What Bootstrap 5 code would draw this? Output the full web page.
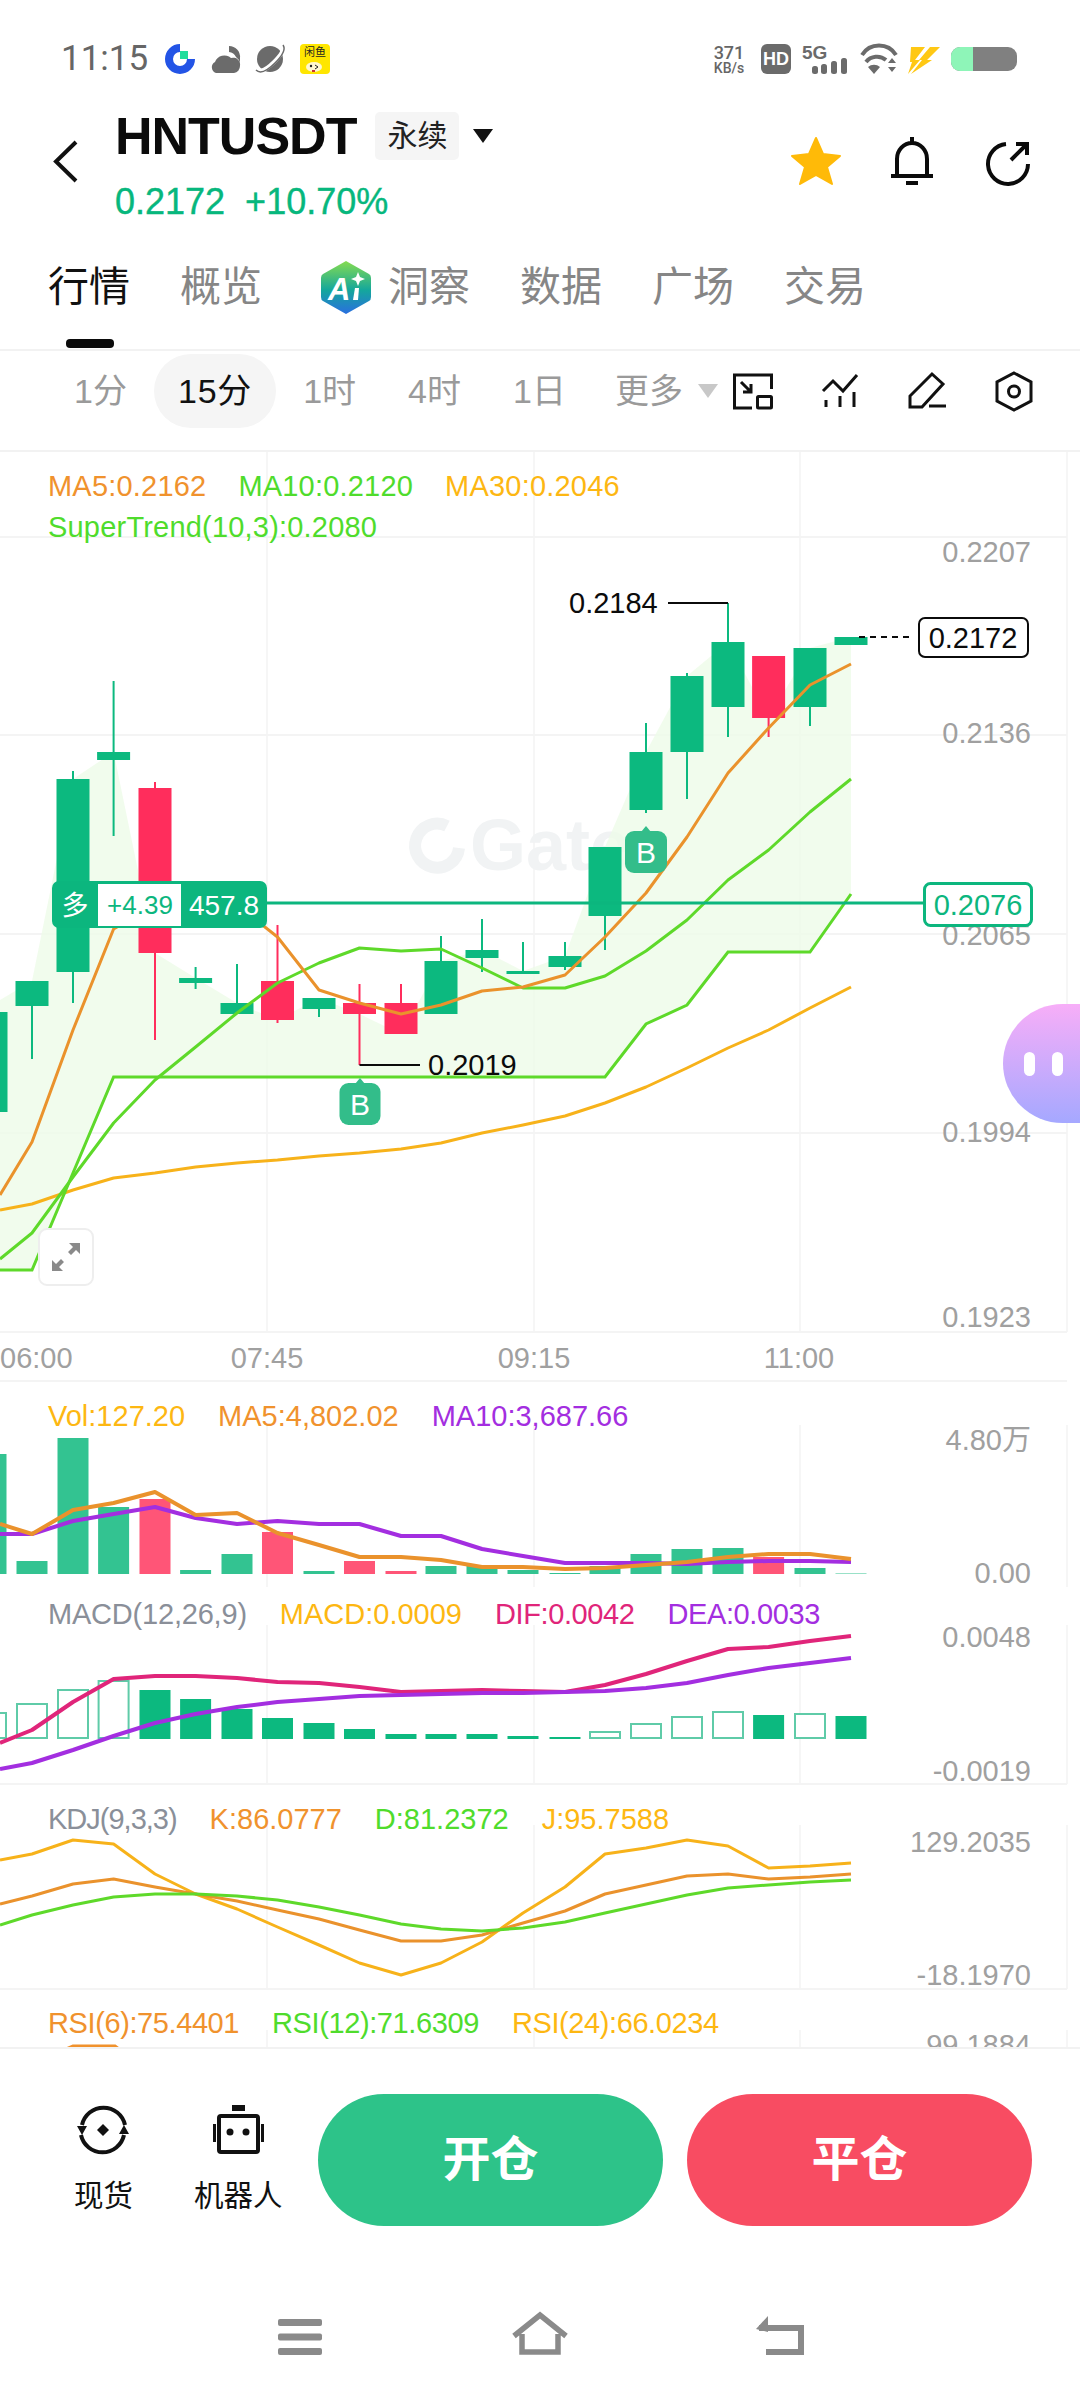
<!DOCTYPE html>
<html lang="zh-CN">

<head>
    <meta charset="UTF-8">
    <meta name="viewport" content="width=device-width, initial-scale=1.0">
    <title>HNTUSDT</title>
    <link href="https://cdn.jsdelivr.net/npm/bootstrap@5.3.3/dist/css/bootstrap.min.css" rel="stylesheet"
        crossorigin="anonymous">
    <style>
        body {
            width: 1080px;
            height: 2400px;
            overflow: hidden;
            position: relative;
            background: #fff;
            font-family: "Liberation Sans", "Noto Sans CJK SC", sans-serif;
        }

        svg {
            display: block;
            overflow: visible;
        }

        svg text {
            font-family: "Liberation Sans", "Noto Sans CJK SC", sans-serif;
        }

        /* status bar */
        .status-row {
            height: 90px;
            padding: 44px 63px 0 61px;
        }

        .status-time {
            font: 35px/30px Roboto, sans-serif;
            color: #666;
            width: 104px;
        }

        .status-speed {
            width: 34px;
            margin-right: 15px;
            color: #666;
            font-family: Roboto, sans-serif;
            font-weight: 500;
            text-align: center;
        }

        .status-speed div:first-child {
            font-size: 18px;
            line-height: 17px;
            margin-top: 0;
        }

        .status-speed div:last-child {
            font-size: 14px;
            line-height: 14px;
            white-space: nowrap;
        }

        /* header */
        .head-row {
            height: 150px;
            padding: 20px 50px 0 53px;
        }

        .back-icon {
            margin-top: 30px;
            margin-right: 37px;
        }

        .title-row {
            height: 52px;
        }

        .pair-name {
            font-size: 52px;
            line-height: 52px;
            font-weight: 700;
            letter-spacing: -1px;
            color: #0b0b0b;
        }

        .pair-chip {
            width: 84px;
            height: 48px;
            margin-left: 19px;
            margin-right: 14px;
            background: #f5f5f5;
            border-radius: 5px;
            font-size: 30px;
            line-height: 48px;
            text-align: center;
            color: #222;
        }

        .pair-price {
            margin-top: 20px;
            height: 40px;
            gap: 20px;
            font-size: 36px;
            line-height: 40px;
            color: #07b77d;
            -webkit-text-stroke: .4px #07b77d;
        }

        .head-icons {
            margin-top: 27px;
            gap: 50px;
            margin-right: 0;
        }

        .head-share {
            margin-left: 3px;
        }

        /* tabs */
        .tab-row {
            height: 109px;
            padding: 20px 0 0 48px;
            gap: 50px;
            border-bottom: 0;
            font-size: 41px;
            line-height: 55px;
            color: #868686;
        }

        .tab-on {
            color: #111;
            position: relative;
        }

        .tab-on::after {
            content: "";
            position: absolute;
            left: 18px;
            top: 79px;
            width: 48px;
            height: 9px;
            border-radius: 4px;
            background: #0b0b0b;
        }

        .tab-ai {
            gap: 17px;
            margin-left: 9px;
        }

        .frame-row {
            height: 103px;
            padding: 3px 49px 0 49px;
            gap: 2px;
            border-top: 2px solid #f2f2f2;
            border-bottom: 2px solid #f2f2f2;
            font-size: 34px;
            line-height: 74px;
            color: #9a9a9a;
        }

        .frame-item {
            padding: 0 25px;
            height: 74px;
            white-space: nowrap;
        }

        .frame-on {
            background: #f5f5f5;
            border-radius: 37px;
            color: #111;
            padding: 0 24px;
            letter-spacing: .8px;
        }

        .frame-more {
            padding: 0 0 0 22px;
            gap: 15px;
            width: 127px;
        }

        .frame-caret {
            width: 0;
            height: 0;
            border-left: 10px solid transparent;
            border-right: 10px solid transparent;
            border-top: 14px solid #c8c8c8;
        }

        .frame-tools {
            gap: 46px;
            margin-left: auto;
            height: 74px;
        }

        /* charts */
        .chart-panel {
            position: relative;
        }

        .chart-clip {
            overflow: hidden;
        }

        .chart-legend {
            position: absolute;
            left: 48px;
            gap: 33px;
            font-size: 29px;
            line-height: 30px;
            white-space: nowrap;
        }

        .legend-wide {
            letter-spacing: .2px;
        }

        .legend-tight {
            letter-spacing: -1px;
        }

        .legend-snug {
            letter-spacing: -.4px;
        }

        .legend-macd {
            letter-spacing: -.2px;
        }

        .axis-text {
            font-size: 29px;
            fill: #a0a0a0;
        }

        .mark-text {
            font-size: 29px;
            fill: #0b0b0b;
        }

        .c-orange { color: #f0922d; }
        .c-green { color: #4fdc2c; }
        .c-yellow { color: #fdb712; }
        .c-purple { color: #a32ee0; }
        .c-pink { color: #e0257a; }
        .c-grey { color: #8a8f99; }

        .expand-btn {
            position: absolute;
            left: 38px;
            top: 776px;
            width: 56px;
            height: 58px;
            background: #fff;
            border: 2px solid #eee;
            border-radius: 9px;
        }

        .side-bubble {
            position: absolute;
            right: 0;
            top: 552px;
            width: 77px;
            height: 119px;
            border-radius: 60px 0 0 60px;
            background: linear-gradient(180deg, #f7aef8, #a5a8ff);
            gap: 17px;
            padding-left: 21px;
        }

        .side-bubble span {
            width: 11px;
            height: 24px;
            border-radius: 6px;
            background: #fff;
        }

        /* bottom actions */
        .action-row {
            height: 179px;
            padding: 45px 48px 0 74px;
            border-top: 2px solid #f2f2f2;
            position: relative;
            background: #fff;
        }

        .action-link {
            padding-top: 11px;
            font-size: 29.5px;
            line-height: 40px;
            color: #111;
            text-align: center;
            white-space: nowrap;
        }

        .action-link svg {
            margin: 0 auto 21px;
        }

        .action-spot {
            width: 57px;
            margin-right: 63px;
        }

        .action-bot {
            width: 88px;
            margin-right: 36px;
        }

        .trade-btn {
            width: 345px;
            height: 132px;
            border: 0;
            border-radius: 66px;
            color: #fff;
            font-size: 48px;
            font-weight: 700;
        }

        .trade-open {
            background: #2dc389;
            margin-right: 24px;
        }

        .trade-close {
            background: #f84c62;
        }

        .nav-row {
            padding: 86px 0 0 278px;
        }
    </style>
</head>

<body>
    <div class="status-row d-flex align-items-start">
        <div class="status-time">11:15</div>
        <div class="d-flex" style="gap:15px">
            <svg width="30" height="30" viewBox="0 0 30 30">
                <path d="M15 4 A11 11 0 1 0 26 15" fill="none" stroke="#2354e6" stroke-width="8" />
                <rect x="15" y="7" width="8" height="8" fill="#22dd9e" />
            </svg>
            <svg width="30" height="30" viewBox="0 0 30 30">
                <path d="M6 29 A6 6 0 0 1 5 18 A10 10 0 0 1 21 14 A7 7 0 0 1 30 22 A7 7 0 0 1 24 29 Z" fill="#6b6b6b" />
                <path d="M19 2 A11 11 0 0 1 30 14 L30 19 A10 10 0 0 0 26 13 A9 9 0 0 0 19 8 Z" fill="#6b6b6b" />
            </svg>
            <svg width="30" height="30" viewBox="0 0 30 30">
                <circle cx="15" cy="15" r="13" fill="#6b6b6b" />
                <path d="M2 25 C6 29 12 25 19 18 C26 11 30 5 27 2" fill="none" stroke="#fff" stroke-width="4" />
                <path d="M1 26 C5 30 12 27 20 19 C27 12 31 5 28 1" fill="none" stroke="#6b6b6b" stroke-width="1.5" />
            </svg>
            <svg width="30" height="30" viewBox="0 0 30 30">
                <rect width="30" height="30" rx="4" fill="#ffe600" />
                <text x="15" y="12" font-size="11" text-anchor="middle" fill="#222">闲鱼</text>
                <ellipse cx="14" cy="23" rx="8" ry="5" fill="#fff8d0" />
                <circle cx="11" cy="22" r="1.2" fill="#222" />
                <path d="M15 21 L18 23 L15 25" fill="none" stroke="#222" stroke-width="1" />
                <path d="M12 27 h3" stroke="#c33" stroke-width="2" />
            </svg>
        </div>
        <div class="d-flex ms-auto">
            <div class="status-speed">
                <div>371</div>
                <div>KB/s</div>
            </div>
            <svg width="256" height="30" viewBox="761 44 256 30">
                <rect x="761" y="44" width="30" height="30" rx="6" fill="#6b6b6b" />
                <text x="776" y="65" font-size="18" font-weight="700" fill="#fff" text-anchor="middle">HD</text>
                <text x="802" y="59" font-size="19" font-weight="700" fill="#6b6b6b">5G</text>
                <g fill="#6b6b6b">
                    <rect x="812" y="66" width="6" height="8" rx="2.5" />
                    <rect x="821" y="64" width="6" height="10" rx="2.5" />
                    <rect x="831" y="61" width="6" height="13" rx="2.5" />
                    <rect x="841" y="58" width="6" height="16" rx="2.5" />
                    <path d="M874 74 L868 67 A9 9 0 0 1 880 67 Z" />
                    <path d="M888 62 l4 -5 l4 5 Z M888 66 l4 5 l4 -5 Z" transform="translate(0 1)" />
                </g>
                <g fill="none" stroke="#6b6b6b" stroke-width="4">
                    <path d="M862 55 A20 20 0 0 1 896 55" />
                    <path d="M866 62 A14 14 0 0 1 886 60" />
                </g>
                <path d="M911 47 H925 L915 60 H920 L908 74 L912 62 H910 Z M930 47 H940 L927 60 H932 L911 74 L922 60 H919 Z"
                    fill="#ffc814" />
                <rect x="951" y="47" width="66" height="24" rx="9" fill="#808080" />
                <path d="M973 47 H960 A9 9 0 0 0 951 56 V62 A9 9 0 0 0 960 71 H973 Z" fill="#8ef5b8" />
            </svg>
        </div>
    </div>

    <div class="head-row d-flex align-items-start">
        <svg class="back-icon" width="25" height="43" viewBox="0 0 25 43">
            <path d="M23 2 L3 21.5 L23 41" fill="none" stroke="#111" stroke-width="4" />
        </svg>
        <div>
            <div class="title-row d-flex align-items-center">
                <div class="pair-name">HNTUSDT</div>
                <div class="pair-chip">永续</div>
                <svg width="20" height="14" viewBox="0 0 20 14">
                    <path d="M0 0 H20 L10 14 Z" fill="#111" />
                </svg>
            </div>
            <div class="pair-price d-flex">
                <span>0.2172</span><span>+10.70%</span>
            </div>
        </div>
        <div class="head-icons d-flex ms-auto">
            <svg width="50" height="50" viewBox="0 0 50 50">
                <path d="M25 1 L32 17 L49 19 L36 30 L41 47 L25 38 L9 47 L14 30 L1 19 L18 17 Z" fill="#ffba08"
                    stroke="#ffba08" stroke-width="2" stroke-linejoin="round" />
            </svg>
            <svg width="42" height="50" viewBox="0 0 42 50">
                <path d="M0 39 H42 M15 46 H27 M21 0 V6 M6 38 V22 A15 16 0 0 1 36 22 V38" fill="none" stroke="#0b0b0b"
                    stroke-width="4" />
            </svg>
            <svg class="head-share" width="44" height="50" viewBox="0 0 44 50">
                <path d="M20 7 A20 20 0 1 0 42 27 M25 23 L41 7 M30 7 H41 V18" fill="none" stroke="#0b0b0b"
                    stroke-width="4" />
            </svg>
        </div>
    </div>

    <div class="tab-row d-flex align-items-start">
        <div class="tab-on">行情</div>
        <div>概览</div>
        <div class="tab-ai d-flex">
            <svg width="50" height="55" viewBox="0 0 50 55">
                <defs>
                    <linearGradient id="aiFill" x1="0" y1="0" x2="0" y2="1">
                        <stop offset="0" stop-color="#86dc4f" />
                        <stop offset=".55" stop-color="#14a79c" />
                        <stop offset="1" stop-color="#2a6fe0" />
                    </linearGradient>
                </defs>
                <path d="M25 1 L48 14 Q50 15 50 18 V37 Q50 40 48 41 L25 54 L2 41 Q0 40 0 37 V18 Q0 15 2 14 Z"
                    fill="url(#aiFill)" />
                <text x="7" y="40" font-size="31" font-weight="700" font-style="italic" fill="#fff">A</text>
                <path d="M37 12 l2 5 l5 2 l-5 2 l-2 5 l-2 -5 l-5 -2 l5 -2 Z" fill="#fff" />
                <path d="M34 28 h4 l-1 12 h-5 Z" fill="#fff" />
            </svg>
            <div>洞察</div>
        </div>
        <div>数据</div>
        <div>广场</div>
        <div>交易</div>
    </div>

    <div class="frame-row d-flex align-items-start">
        <div class="frame-item">1分</div>
        <div class="frame-item frame-on">15分</div>
        <div class="frame-item">1时</div>
        <div class="frame-item">4时</div>
        <div class="frame-item">1日</div>
        <div class="frame-item frame-more d-flex align-items-center">更多<span class="frame-caret"></span></div>
        <div class="frame-tools d-flex align-items-center">
            <svg width="40" height="40" viewBox="0 0 40 40" fill="none" stroke="#111" stroke-width="3">
                <path d="M19 37 H1.5 V4 H38.5 V18 M8 11 L18 21 M10 21 H18 V13" />
                <rect x="24.5" y="25.5" width="14" height="11.5" rx="1" />
            </svg>
            <svg width="40" height="40" viewBox="0 0 40 40" fill="none" stroke="#111" stroke-width="3">
                <path d="M4 20 L14 10 L24 20 L38 4 M7 29 V36 M21 25 V36 M35 21 V36" />
            </svg>
            <svg width="40" height="40" viewBox="0 0 40 40" fill="none" stroke="#111" stroke-width="3">
                <path d="M27 3 L38 13 L17 36 H5 V25 Z M24 35 H41" />
            </svg>
            <svg width="40" height="40" viewBox="0 0 40 40" fill="none" stroke="#111" stroke-width="3">
                <path d="M23 2 L40 11 V30 L23 39 L6 30 V11 Z" />
                <circle cx="23" cy="20.5" r="5.5" />
            </svg>
        </div>
    </div>

    <!-- svg viewBoxes use page y so the numbers line up across panels -->
    <div class="chart-panel">
        <div class="chart-legend legend-wide" style="top:19px">
            <div class="d-flex" style="gap:32px"><span class="c-orange">MA5:0.2162</span><span class="c-green">MA10:0.2120</span><span class="c-yellow">MA30:0.2046</span></div>
            <div class="c-green" style="margin-top:11px">SuperTrend(10,3):0.2080</div>
        </div>
        <svg width="1080" height="930" viewBox="0 452 1080 930">
            <g id="mainGrid"></g>
            <g fill="none" stroke="#f1f3f4" stroke-width="12">
                <path d="M447 826 A22 22 0 1 0 459 848" />
            </g>
            <text x="470" y="870" font-size="72" font-weight="700" fill="#f1f3f4">Gate</text>
            <polygon id="trendFill" fill="#eefbe9" fill-opacity=".8"></polygon>
            <g id="mainCandles"></g>
            <g id="mainLines"></g>
            <path d="M668 603 H728 M359.5 1065 H420" fill="none" stroke="#0b0b0b" stroke-width="2" />
            <text class="mark-text" x="569" y="613">0.2184</text>
            <text class="mark-text" x="428" y="1075">0.2019</text>
            <path d="M859 637 H912" stroke="#0b0b0b" stroke-width="2" stroke-dasharray="6 5" />
            <rect x="919" y="618" width="109" height="39" rx="6" fill="#fff" stroke="#0b0b0b" stroke-width="2" />
            <text class="mark-text" x="973" y="648" text-anchor="middle">0.2172</text>

            <g fill="#33bd8a">
                <path d="M646 826 L651 832 H641 Z" />
                <rect x="625" y="831" width="42" height="42" rx="9" />
                <path d="M360 1078 L365 1084 H355 Z" />
                <rect x="339.5" y="1083" width="41" height="42" rx="9" />
            </g>
            <text x="646" y="863" font-size="30" fill="#fff" text-anchor="middle">B</text>
            <text x="360" y="1115" font-size="30" fill="#fff" text-anchor="middle">B</text>

            <text class="axis-text" x="1031" y="562" text-anchor="end">0.2207</text>
            <text class="axis-text" x="1031" y="743" text-anchor="end">0.2136</text>
            <text class="axis-text" x="1031" y="945" text-anchor="end">0.2065</text>
            <text class="axis-text" x="1031" y="1142" text-anchor="end">0.1994</text>
            <text class="axis-text" x="1031" y="1327" text-anchor="end">0.1923</text>

            <rect x="267" y="901.5" width="656" height="3" fill="#0cb67e" />
            <rect x="924.5" y="883.5" width="107" height="42" rx="6" fill="#fff" stroke="#0cb67e" stroke-width="3" />
            <text x="978" y="915" font-size="29" fill="#0cb67e" text-anchor="middle">0.2076</text>
            <rect x="52" y="881" width="215" height="47" rx="7" fill="#0cb67e" />
            <rect x="98" y="884" width="83" height="42" fill="#fff" />
            <text x="75" y="915" font-size="27" fill="#fff" text-anchor="middle">多</text>
            <text x="140" y="914" font-size="26" fill="#0cb67e" text-anchor="middle">+4.39</text>
            <text x="224" y="915" font-size="28" fill="#fff" text-anchor="middle">457.8</text>

            <text class="axis-text" x="0" y="1368">06:00</text>
            <text class="axis-text" x="267" y="1368" text-anchor="middle">07:45</text>
            <text class="axis-text" x="534" y="1368" text-anchor="middle">09:15</text>
            <text class="axis-text" x="799" y="1368" text-anchor="middle">11:00</text>
        </svg>
        <div class="expand-btn d-flex align-items-center justify-content-center">
            <svg width="28" height="28" viewBox="0 0 28 28" fill="#8a8a8a">
                <path d="M28 0 V11 L24 7 L19 12 L16 9 L21 4 L17 0 Z M0 28 V17 L4 21 L9 16 L12 19 L7 24 L11 28 Z" />
            </svg>
        </div>
        <div class="side-bubble d-flex align-items-center"><span></span><span></span></div>
    </div>

    <div class="chart-panel">
        <div class="chart-legend d-flex" style="top:19px">
            <span class="c-yellow">Vol:127.20</span><span class="c-orange">MA5:4,802.02</span><span class="c-purple">MA10:3,687.66</span>
        </div>
        <svg width="1080" height="205" viewBox="0 1382 1080 205">
            <g id="volGrid"></g>
            <g id="volBars"></g>
            <g id="volLines"></g>
            <text class="axis-text" x="1031" y="1450" text-anchor="end">4.80万</text>
            <text class="axis-text" x="1031" y="1583" text-anchor="end">0.00</text>
        </svg>
    </div>

    <div class="chart-panel">
        <div class="chart-legend d-flex" style="top:12px">
            <span class="c-grey legend-macd">MACD(12,26,9)</span><span class="c-yellow">MACD:0.0009</span><span class="c-pink legend-snug">DIF:0.0042</span><span class="c-purple legend-snug">DEA:0.0033</span>
        </div>
        <svg width="1080" height="197" viewBox="0 1587 1080 197">
            <g id="macdGrid"></g>
            <g id="macdBars"></g>
            <g id="macdLines"></g>
            <text class="axis-text" x="1031" y="1647" text-anchor="end">0.0048</text>
            <text class="axis-text" x="1031" y="1781" text-anchor="end">-0.0019</text>
        </svg>
    </div>

    <div class="chart-panel">
        <div class="chart-legend d-flex" style="top:20px">
            <span class="c-grey legend-tight">KDJ(9,3,3)</span><span class="c-orange">K:86.0777</span><span class="c-green">D:81.2372</span><span class="c-yellow">J:95.7588</span>
        </div>
        <svg width="1080" height="205" viewBox="0 1784 1080 205">
            <g id="kdjGrid"></g>
            <g id="kdjLines"></g>
            <text class="axis-text" x="1031" y="1852" text-anchor="end">129.2035</text>
            <text class="axis-text" x="1031" y="1985" text-anchor="end">-18.1970</text>
        </svg>
    </div>

    <div class="chart-panel chart-clip">
        <div class="chart-legend d-flex legend-snug" style="top:19px">
            <span class="c-orange">RSI(6):75.4401</span><span class="c-green">RSI(12):71.6309</span><span class="c-yellow">RSI(24):66.0234</span>
        </div>
        <svg width="1080" height="58" viewBox="0 1989 1080 58">
            <g id="rsiGrid"></g>
            <path d="M66 2049 L73 2046 H115 L119 2049" fill="none" stroke="#f0922d" stroke-width="3" />
            <text class="axis-text" x="1031" y="2055" text-anchor="end">99.1884</text>
        </svg>
    </div>

    <div class="action-row d-flex align-items-start">
        <div class="action-link action-spot">
            <svg width="50" height="50" viewBox="0 0 50 50" fill="none" stroke="#111" stroke-width="4">
                <path d="M4 20 A22 22 0 0 1 47 20 M46 30 A22 22 0 0 1 3 30" />
                <path d="M-1 21 L4 30 L9 21 Z M41 29 L46 20 L51 29 Z" fill="#111" stroke="none" />
                <path d="M25 19 L31 25 L25 31 L19 25 Z" fill="#111" stroke="none" />
            </svg>
            <div>现货</div>
        </div>
        <div class="action-link action-bot">
            <svg width="51" height="50" viewBox="0 0 51 50" fill="none" stroke="#111" stroke-width="4">
                <rect x="19" y="0" width="13" height="6" fill="#111" stroke="none" />
                <rect x="6" y="11" width="39" height="36" rx="2" />
                <path d="M1.5 19 V37 M49.5 19 V37" stroke-width="3" />
                <circle cx="17" cy="27" r="3.5" fill="#111" stroke="none" />
                <circle cx="33" cy="27" r="3.5" fill="#111" stroke="none" />
            </svg>
            <div>机器人</div>
        </div>
        <button type="button" class="btn trade-btn trade-open">开仓</button>
        <button type="button" class="btn trade-btn trade-close">平仓</button>
    </div>

    <div class="nav-row d-flex align-items-end">
        <svg width="44" height="36" viewBox="0 0 44 36" fill="#8a8a8a" style="margin-right:190px">
            <rect width="44" height="7" rx="2" />
            <rect y="14.5" width="44" height="7" rx="2" />
            <rect y="29" width="44" height="7" rx="2" />
        </svg>
        <svg width="56" height="43" viewBox="0 0 56 43" fill="none" stroke="#8a8a8a" stroke-width="5.5"
            style="margin-right:188px">
            <path d="M2 24 L28 3 L54 24 M10 22 V40 H46 V22" />
        </svg>
        <svg width="48" height="42" viewBox="0 0 48 42" fill="none" stroke="#8a8a8a" stroke-width="6">
            <path d="M3 15 H45 V39 H10" />
            <path d="M0 16 L12 3 V19 Z" fill="#8a8a8a" stroke="none" />
        </svg>
    </div>

    <script src="https://cdn.jsdelivr.net/npm/bootstrap@5.3.3/dist/js/bootstrap.bundle.min.js"
        crossorigin="anonymous"></script>
    <script>
        const NS = 'http://www.w3.org/2000/svg';
        const GREEN = '#0cb97f', RED = '#ff2d5c';
        const ORANGE = '#ea922c', LIME = '#5ed92a', YELLOW = '#f7b21a', PURPLE = '#a32ee0', PINK = '#e0257a';

        // candle centres, first entry is the left edge for line series
        const xs = [0, 32, 73, 113.6, 155, 195.6, 237, 277.5, 319, 359.5, 401, 441, 482, 523, 565, 605, 646, 687, 728, 768.6, 810, 851];
        const barXs = [-9].concat(xs.slice(1));

        function add(id, tag, attrs) {
            const el = document.createElementNS(NS, tag);
            for (const k in attrs) el.setAttribute(k, attrs[k]);
            document.getElementById(id).appendChild(el);
        }

        function grid(id, top, bottom, rows) {
            [267, 534, 800, 1067].forEach(x => add(id, 'line', { x1: x, x2: x, y1: top, y2: bottom, stroke: '#f6f6f6', 'stroke-width': 2 }));
            rows.forEach(y => add(id, 'line', { x1: 0, x2: 1067, y1: y, y2: y, stroke: '#f4f4f4', 'stroke-width': 2 }));
        }

        function series(id, ys, color, width) {
            const pts = ys.map((y, i) => xs[i] + ',' + y).join(' ');
            add(id, 'polyline', { points: pts, fill: 'none', stroke: color, 'stroke-width': width || 3, 'stroke-linejoin': 'round' });
        }

        grid('mainGrid', 452, 1332, [537, 735, 934, 1133, 1332, 1381]);
        grid('volGrid', 1425, 1587, []);
        grid('macdGrid', 1625, 1784, [1784]);
        grid('kdjGrid', 1825, 1989, [1989]);
        grid('rsiGrid', 2030, 2047, []);

        // close line on top, supertrend line below
        const superTrend = [[0, 1270], [32, 1270], [73, 1173], [113.6, 1077], [605, 1077], [646, 1024], [687, 1005], [728, 952], [810, 952], [851, 894]];
        const closes = [1000, 981, 779, 752, 953, 978, 1003, 1020, 998, 1014, 1034, 961, 950, 971, 956, 847, 752, 676, 642, 718, 648, 637];
        const fillPts = closes.map((y, i) => xs[i] + ',' + y).concat(superTrend.slice().reverse().map(p => p.join(',')));
        document.getElementById('trendFill').setAttribute('points', fillPts.join(' '));

        // x, body top, body bottom, wick top, wick bottom, colour
        const candles = [
            [-9, 1012, 1112, 1012, 1112, GREEN], [32, 981, 1006, 981, 1059, GREEN], [73, 779, 972, 771, 1003, GREEN],
            [113.6, 752, 760, 681, 836, GREEN], [155, 788, 953, 782, 1040, RED], [195.6, 978, 983, 967, 989, GREEN],
            [237, 1003, 1014, 964, 1014, GREEN], [277.5, 981, 1020, 925, 1023, RED], [319, 998, 1009, 998, 1017, GREEN],
            [359.5, 1003, 1014, 984, 1065, RED], [401, 1003, 1034, 984, 1034, RED], [441, 961, 1014, 936, 1014, GREEN],
            [482, 950, 958, 919, 972, GREEN], [523, 971, 974, 942, 974, GREEN], [565, 956, 967, 942, 970, GREEN],
            [605, 847, 916, 847, 950, GREEN], [646, 752, 810, 723, 813, GREEN], [687, 676, 752, 673, 799, GREEN],
            [728, 642, 707, 603, 737, GREEN], [768.6, 656, 718, 656, 737, RED], [810, 648, 707, 648, 726, GREEN],
            [851, 637, 645, 637, 645, GREEN]
        ];
        candles.forEach(c => {
            add('mainCandles', 'line', { x1: c[0], x2: c[0], y1: c[3], y2: c[4], stroke: c[5], 'stroke-width': 2 });
            add('mainCandles', 'rect', { x: c[0] - 16.5, y: c[1], width: 33, height: c[2] - c[1], fill: c[5] });
        });

        series('mainLines', [1210, 1204, 1190, 1178, 1173, 1167, 1163, 1160, 1156, 1153, 1149, 1143, 1133, 1125, 1116, 1103, 1087, 1068, 1048, 1030, 1008, 987], YELLOW);
        add('mainLines', 'polyline', { points: superTrend.map(p => p.join(',')).join(' '), fill: 'none', stroke: LIME, 'stroke-width': 3 });
        series('mainLines', [1259, 1233, 1177, 1123, 1080, 1047, 1013, 983, 963, 948, 951, 949, 968, 988, 988, 976, 951, 920, 880, 850, 812, 779], LIME);
        series('mainLines', [1195, 1142, 1030, 929, 905, 898, 905, 937, 990, 1003, 1014, 1005, 991, 987, 975, 937, 893, 837, 773, 728, 685, 664], ORANGE);

        const volTops = [1454, 1561, 1438, 1507, 1499, 1570, 1554, 1532, 1571, 1561, 1571, 1566, 1565, 1570, 1573, 1566, 1554, 1549, 1548, 1557, 1568, 1573];
        const volRed = [4, 7, 9, 10, 19];
        volTops.forEach((y, i) => add('volBars', 'rect', {
            x: barXs[i] - 15.5, y: y, width: 31, height: 1574 - y,
            fill: volRed.includes(i) ? '#ff5577' : '#33c391', 'fill-opacity': i === 21 ? .5 : 1
        }));
        series('volLines', [1534, 1534, 1521, 1514, 1507, 1518, 1524, 1521, 1524, 1524, 1536, 1536, 1549, 1556, 1563, 1563, 1563, 1564, 1562, 1561, 1561, 1562], PURPLE, 4);
        series('volLines', [1524, 1534, 1510, 1503, 1492, 1515, 1513, 1533, 1545, 1557, 1557, 1560, 1567, 1567, 1569, 1568, 1565, 1562, 1557, 1554, 1554, 1559], ORANGE, 4);

        // macd histogram, the open bars are the hollow ones
        const macdTops = [1713, 1704, 1690, 1681, 1690, 1699, 1709, 1718, 1723, 1729, 1734, 1734, 1734, 1736, 1737, 1732, 1724, 1717, 1712, 1715, 1714, 1716];
        const macdOpen = [0, 1, 2, 3, 15, 16, 17, 18, 20];
        macdTops.forEach((y, i) => {
            if (macdOpen.includes(i)) {
                add('macdBars', 'rect', { x: barXs[i] - 15, y: y, width: 30, height: 1738 - y, fill: '#fff', stroke: '#5fcba8', 'stroke-width': 2 });
            } else {
                add('macdBars', 'rect', { x: barXs[i] - 15.5, y: y, width: 31, height: 1739 - y, fill: GREEN });
            }
        });
        series('macdLines', [1743, 1730, 1702, 1679, 1676, 1676, 1678, 1682, 1683, 1687, 1692, 1691, 1690, 1691, 1692, 1685, 1674, 1661, 1649, 1647, 1641, 1636], PINK, 4);
        series('macdLines', [1769, 1763, 1750, 1736, 1723, 1714, 1707, 1702, 1699, 1696, 1695, 1694, 1693, 1693, 1692, 1691, 1688, 1683, 1675, 1668, 1663, 1658], PURPLE, 4);

        series('kdjLines', [1860, 1854, 1840, 1844, 1874, 1894, 1909, 1927, 1945, 1963, 1975, 1963, 1942, 1913, 1887, 1854, 1848, 1840, 1846, 1868, 1866, 1863], YELLOW);
        series('kdjLines', [1904, 1896, 1884, 1879, 1887, 1894, 1901, 1910, 1919, 1930, 1941, 1941, 1935, 1923, 1911, 1894, 1885, 1876, 1874, 1879, 1877, 1874], ORANGE);
        series('kdjLines', [1925, 1915, 1905, 1897, 1894, 1894, 1896, 1900, 1907, 1915, 1924, 1929, 1931, 1928, 1922, 1913, 1904, 1895, 1888, 1885, 1882, 1880], LIME);
    </script>
</body>

</html>
